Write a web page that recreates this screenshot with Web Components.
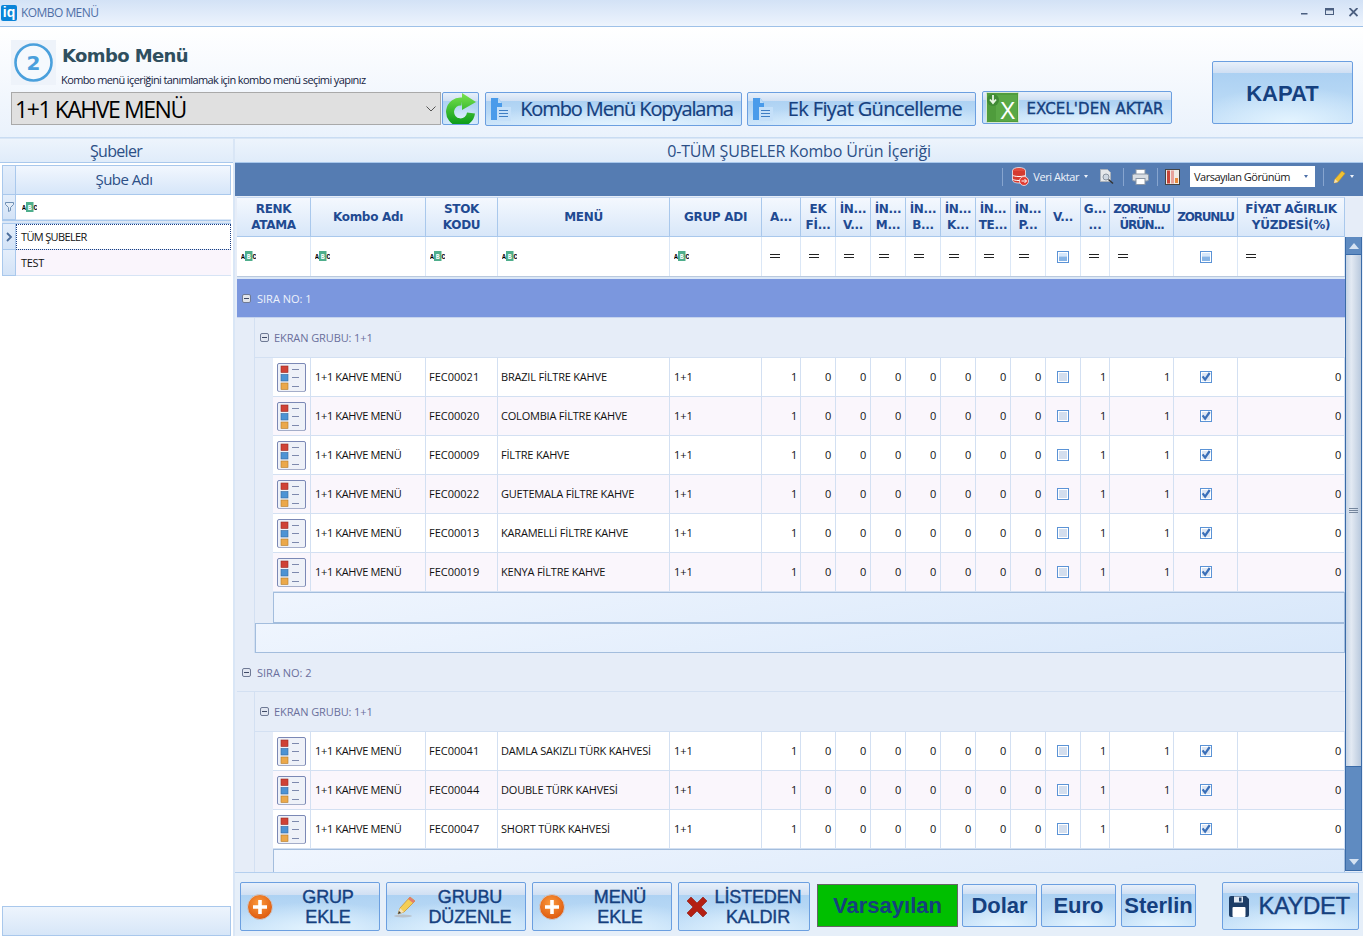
<!DOCTYPE html>
<html lang="tr">
<head>
<meta charset="utf-8">
<title>KOMBO MENÜ</title>
<style>
  html, body { margin: 0; padding: 0; height: 100%; overflow: hidden; background: #e9f1fb; }
  body { font-family: "Liberation Sans", Arial, sans-serif; }
</style>
</head>
<body>
<iq-window></iq-window>
<script>
const COLS = '74px 115px 72px 172px 92px 39px 35px 35px 35px 35px 35px 35px 35px 35px 29px 64px 64px 107px';
const FIRST_COL_NESTED = 38; // 273 -> 311, icon cell once nested

const GROUP1 = [
  ['FEC00021', 'BRAZIL FİLTRE KAHVE'],
  ['FEC00020', 'COLOMBIA FİLTRE KAHVE'],
  ['FEC00009', 'FİLTRE KAHVE'],
  ['FEC00022', 'GUETEMALA FİLTRE KAHVE'],
  ['FEC00013', 'KARAMELLİ FİLTRE KAHVE'],
  ['FEC00019', 'KENYA FİLTRE KAHVE']
];
const GROUP2 = [
  ['FEC00041', 'DAMLA SAKIZLI TÜRK KAHVESİ'],
  ['FEC00044', 'DOUBLE TÜRK KAHVESİ'],
  ['FEC00047', 'SHORT TÜRK KAHVESİ']
];

const ABC = `<svg width="15" height="10" viewBox="0 0 15 10" style="display:block"><rect x="4" y="0" width="7.500" height="10" fill="#4fae8c"/><g font-family="Liberation Mono, monospace" font-size="6.500" font-weight="700"><text x="0" y="7.500" fill="#000">A</text><text x="5.800" y="7.500" fill="#fff">B</text><text x="11.500" y="7.500" fill="#000">C</text></g></svg>`;
const EQ = `<svg width="10" height="5" viewBox="0 0 10 5" style="display:block"><path d="M0 .5h10M0 3.500h10" stroke="#222" stroke-width="1"/></svg>`;

function checkbox(state) {
  // state: 'off', 'on', 'filter'
  let inner = '<rect x="2" y="2" width="8" height="8" fill="#d3deee"/>';
  if (state === 'on') inner = '<rect x="2" y="2" width="8" height="8" fill="#dde6f3"/><path d="M2.600 5.400l2.500 3.200 4.600-6.600" fill="none" stroke="#3a6fb8" stroke-width="2.200"/>';
  if (state === 'filter') inner = '<rect x="2" y="2" width="8" height="3.500" fill="#d5e7fb"/><rect x="2" y="5.500" width="8" height="4.500" fill="#86b4e6"/>';
  return `<svg width="12" height="12" viewBox="0 0 12 12" style="display:block"><rect x=".5" y=".5" width="11" height="11" fill="#fff" stroke="#5b93d6"/>${inner}</svg>`;
}

const RENK_ICON = `<svg width="29" height="29" viewBox="0 0 29 29" style="display:block">
  <rect x=".5" y=".5" width="28" height="28" rx="1.500" fill="#eef1f8" stroke="#7b88b5"/>
  <path d="M1 28.500h27" stroke="#a4adc9"/>
  <rect x="4" y="3" width="7" height="6.500" fill="#cf4236" stroke="#9a2b22" stroke-width=".6"/>
  <rect x="4" y="11.500" width="7" height="6.500" fill="#4d93d4" stroke="#33689f" stroke-width=".6"/>
  <rect x="4" y="20" width="7" height="6.500" fill="#eba84a" stroke="#b37a28" stroke-width=".6"/>
  <path d="M15 6.500h7M15 14.500h7M15 23.500h7" stroke="#7d89ad"/>
</svg>`;

const ORANGE_PLUS = `<svg width="26" height="26" viewBox="0 0 26 26" style="display:block"><defs><radialGradient id="o" cx=".45" cy=".35" r=".75"><stop offset="0" stop-color="#fb9a3c"/><stop offset="1" stop-color="#d94f08"/></radialGradient></defs><circle cx="13" cy="13" r="12.500" fill="url(#o)" stroke="#c9ccd4"/><path d="M13 6v14M6 13h14" stroke="#fff" stroke-width="3.600"/></svg>`;
const PENCIL = `<svg width="26" height="26" viewBox="0 0 26 26" style="display:block"><ellipse cx="10" cy="22" rx="9" ry="1.400" fill="#b9c2cc"/><path d="M5 20l2-6L17 3l5 4L11 18z" fill="#f5cf55" stroke="#c8973a" stroke-width=".8"/><path d="M17 3l5 4-2 2-5-4z" fill="#e27b6f"/><path d="M5 20l2-6 4 4z" fill="#f4e2bc"/><path d="M5 20l1-3 2 2z" fill="#333"/></svg>`;
const RED_X = `<svg width="24" height="24" viewBox="0 0 24 24" style="display:block"><path d="M2 6l4-4 6 6 6-6 4 4-6 6 6 6-4 4-6-6-6 6-4-4 6-6z" fill="#b41f12" stroke="#8c1a10" stroke-width=".6"/></svg>`;
const FLOPPY = `<svg width="22" height="23" viewBox="0 0 22 23" style="display:block"><path d="M1 3q0-2 2-2h15l3 3v16q0 2-2 2H3q-2 0-2-2z" fill="#1d3d66"/><rect x="6" y="1.500" width="9" height="6" fill="#dfe7f1"/><rect x="11" y="2.500" width="2.500" height="4" fill="#1d3d66"/><rect x="4.500" y="12" width="13" height="10" rx="1" fill="#fff"/></svg>`;
const DOC = `<svg width="22" height="26" viewBox="0 0 22 26" style="display:block"><path d="M0 2h7l4 5v17H0z" fill="#4a9bea"/><path d="M7 2l4 5H7z" fill="#bcdcf8"/><path d="M6 11h14v14H6z" fill="#c5e0f9"/><path d="M8 14.500h9M8 17.500h9M8 20.500h9" stroke="#3e7ec4"/></svg>`;
const EXCEL = `<svg width="33" height="31" viewBox="0 0 33 31" style="display:block"><rect x=".5" y=".5" width="32" height="30" rx="1" fill="#4f9c3c" stroke="#d6e8cf"/><rect x="10" y="3" width="21" height="26" fill="#5aa846"/><text x="14" y="27" font-family="Liberation Sans, sans-serif" font-size="23" fill="#fff">X</text><circle cx="7" cy="8" r="6" fill="#3f8a34"/><path d="M7 3v7M4 7.500l3 3.500 3-3.500" fill="none" stroke="#e8f5e2" stroke-width="1.800"/></svg>`;
const REFRESH = `<svg width="31" height="31" viewBox="0 0 31 31" style="display:block"><defs><linearGradient id="g" gradientUnits="userSpaceOnUse" x1="0" y1="0" x2="0" y2="31"><stop offset="0" stop-color="#7be34f"/><stop offset="1" stop-color="#0c9c1a"/></linearGradient></defs><path d="M25 20A10.500 10.500 0 1 1 16 8.500" fill="none" stroke="url(#g)" stroke-width="8"/><path d="M16 0l14 9-14 8z" fill="url(#g)"/></svg>`;

// glossy blue button used across the window
class IqButton extends HTMLElement {
  constructor() {
    super();
    this.attachShadow({mode: 'open'}).innerHTML = `
      <style>
        :host { display: inline-flex; box-sizing: border-box; border: 1px solid #6b9fe0; border-radius: 2px;
          color: #15407f; font-family: "Liberation Sans", Arial, sans-serif; align-items: center; overflow: hidden; position: relative;
          background:
            linear-gradient(180deg, #e8f0fa 0, #cfdff3 var(--gloss, 26%), transparent var(--gloss, 26%)),
            radial-gradient(ellipse 70% 60% at 55% 100%, #e4f4ff 0, transparent 100%),
            linear-gradient(180deg, #a6cdf1 0, #c4e0f8 100%); }
        .wrap { display: flex; align-items: center; width: 100%; height: 100%; }
        .ic { flex: none; display: flex; margin-right: var(--gap, 0); }
        .tx { flex: 1; text-align: center; line-height: var(--lh, 1.1); white-space: nowrap; padding-top: var(--tp, 0); }
      </style>
      <div class="wrap"><span class="ic"><slot name="icon"></slot></span><span class="tx"><slot></slot></span></div>`;
  }
}
customElements.define('iq-button', IqButton);

class IqTitlebar extends HTMLElement {
  constructor() {
    super();
    this.attachShadow({mode: 'open'}).innerHTML = `
      <style>
        :host { display: flex; height: 27px; box-sizing: border-box; align-items: flex-start; justify-content: space-between;
          background: linear-gradient(180deg, #d3e2f6 0, #e9f1fc 22px, #eff5fd 100%); border-bottom: 1px solid #9ec1e8; }
        .l { display: flex; align-items: center; gap: 4px; padding: 4px 0 0 1px; }
        .logo { width: 16px; height: 16px; background: #0a84d8; border-radius: 2px; color: #fff; font: 700 14px/15px "Liberation Sans", sans-serif; text-align: center; }
        .t { font: 12px "Open Sans", "Liberation Sans", sans-serif; color: #4f6fa6; letter-spacing: -.55px; }
        .r { display: flex; gap: 15px; padding: 8px 5px 0 0; align-items: flex-start; }
      </style>
      <div class="l"><div class="logo">iq</div><span class="t">KOMBO MENÜ</span></div>
      <div class="r">
        <svg width="9" height="10" viewBox="0 0 9 10"><rect x="0" y="5" width="6.500" height="1.500" fill="#4b5f80"/></svg>
        <svg width="9" height="10" viewBox="0 0 9 10"><rect x=".5" y=".5" width="8" height="6" fill="#dbe5f2" stroke="#4b5f80"/><rect x="0" y="0" width="9" height="2.500" fill="#4b5f80"/></svg>
        <svg width="9" height="10" viewBox="0 0 9 10"><path d="M.5 0l8 8M8.500 0l-8 8" stroke="#4b5f80" stroke-width="1.800"/></svg>
      </div>`;
  }
}
customElements.define('iq-titlebar', IqTitlebar);

class IqHeader extends HTMLElement {
  constructor() {
    super();
    const ic = s => s.replace('<svg', '<svg slot="icon"');
    this.attachShadow({mode: 'open'}).innerHTML = `
      <style>
        :host { display: grid; grid-template-columns: 1fr auto; height: 111px; box-sizing: border-box; padding: 13px 10px 0 11px;
          background: linear-gradient(180deg, #fff 0, #eaf2fc 100%); border-bottom: 1px solid #c9dcf2; }
        .top { display: flex; height: 50px; }
        .badge { width: 45px; height: 45px; background: #eef3fa; display: flex; align-items: center; justify-content: center; flex: none; }
        .tt { padding-left: 5px; }
        h1 { margin: 5px 0 0 1px; font: 700 18px/22px "DejaVu Sans", sans-serif; color: #2f4f5f; letter-spacing: -.6px; }
        p { margin: 6px 0 0; font: 11px/13px "Open Sans", "Liberation Sans", sans-serif; color: #14233f; letter-spacing: -.6px; white-space: nowrap; }
        .row { display: flex; align-items: flex-start; margin-top: 2px; }
        .combo { width: 430px; height: 33px; box-sizing: border-box; border: 1px solid #a9a9a9; background: #e0e0e0; display: flex; align-items: center; justify-content: space-between;
          padding: 0 4px 0 3px; font: 23px "Open Sans", "Liberation Sans", sans-serif; color: #000; letter-spacing: -1.45px; }
        .btns { display: flex; align-items: flex-start; margin-left: 1px; }
        iq-button.r { width: 37px; height: 33px; padding-left: 3px; }
        iq-button.k { height: 34px; font: 20px "Open Sans", "Liberation Sans", sans-serif; -webkit-text-stroke: .2px #15407f; }
        .side { display: flex; }
        iq-button.kapat { width: 141px; height: 63px; margin-top: 21px; font: 700 22px "Liberation Sans", sans-serif; --gloss: 18%; --tp: 3px; }
      </style>
      <div>
        <div class="top">
          <div class="badge"><svg width="39" height="39" viewBox="0 0 39 39"><circle cx="19.500" cy="19.500" r="18" fill="#f5f9fd" stroke="#4aa0dc" stroke-width="2.600"/><text x="19.500" y="27" text-anchor="middle" font-family="DejaVu Sans, sans-serif" font-weight="700" font-size="20" fill="#4aa0dc">2</text></svg></div>
          <div class="tt"><h1>Kombo Menü</h1><p>Kombo menü içeriğini tanımlamak için kombo menü seçimi yapınız</p></div>
        </div>
        <div class="row">
          <div class="combo"><span>1+1 KAHVE MENÜ</span><svg width="10" height="6" viewBox="0 0 10 6"><path d="M.5.5L5 5 9.500.5" fill="none" stroke="#555"/></svg></div>
          <div class="btns">
            <iq-button class="r">${ic(REFRESH)}</iq-button>
            <iq-button class="k" style="width:257px;margin-left:6px;padding-left:5px;padding-right:1px;letter-spacing:-1.1px">${ic(DOC)}Kombo Menü Kopyalama</iq-button>
            <iq-button class="k" style="width:229px;margin-left:5px;padding-left:5px;letter-spacing:-.65px">${ic(DOC)}Ek Fiyat Güncelleme</iq-button>
            <iq-button class="k" style="width:190px;height:33px;margin:-1px 0 0 6px;padding-left:3px;font:15px 'DejaVu Sans',sans-serif;--lh:1;--tp:3px;letter-spacing:.1px;-webkit-text-stroke:.35px #15407f">${ic(EXCEL)}EXCEL'DEN AKTAR</iq-button>
          </div>
        </div>
      </div>
      <div class="side"><iq-button class="kapat">KAPAT</iq-button></div>`;
  }
}
customElements.define('iq-header', IqHeader);

// panel caption strip (Şubeler, 0-TÜM ŞUBELER ...)
class IqCaption extends HTMLElement {
  constructor() {
    super();
    this.attachShadow({mode: 'open'}).innerHTML = `
      <style>
        :host { display: flex; align-items: center; justify-content: center; height: 24px; box-sizing: border-box; color: #2c4f86; padding-right: var(--pr, 0);
          font: 16px "Open Sans", "Liberation Sans", sans-serif; letter-spacing: var(--ls, -.3px); background: linear-gradient(180deg, #edf4fc, #e0ecfa); border-bottom: 1px solid #a9c8ec; }
      </style><slot></slot>`;
  }
}
customElements.define('iq-caption', IqCaption);

class IqBranches extends HTMLElement {
  constructor() {
    super();
    this.attachShadow({mode: 'open'}).innerHTML = `
      <style>
        :host { display: flex; flex-direction: column; background: #fff; height: 100%; box-sizing: border-box; padding: 2px 2px 0 2px; }
        .row { display: grid; grid-template-columns: 14px 1fr; }
        .ind { background: linear-gradient(180deg, #e4eefb, #d3e3f7); border: solid #a9c8ec; border-width: 0 1px 1px 1px; display: flex; align-items: center; justify-content: center; box-sizing: border-box; }
        .head .ind { border-top: 1px solid #a9c8ec; }
        .head .c { height: 30px; box-sizing: border-box; border: 1px solid #a9c8ec; border-left: 0; background: linear-gradient(180deg, #f2f7fe, #d6e6f9); padding: 0 0 2px 2px;
          display: flex; align-items: center; justify-content: center; font: 15px "Open Sans", "Liberation Sans", sans-serif; color: #2c4f86; letter-spacing: -.55px; }
        .filter { height: 25px; }
        .filter .c { display: flex; align-items: center; padding-left: 6px; border-bottom: 1px solid #dbe7f6; }
        .sep { height: 4px; background: #dbe7f6; border-top: 1px solid #a9c8ec; border-bottom: 1px solid #a9c8ec; box-sizing: border-box; }
        .data { height: 26px; }
        .data .c { display: flex; align-items: center; padding-left: 5px; font: 11px "Open Sans", "Liberation Sans", sans-serif; letter-spacing: -.65px; color: #111; border-bottom: 1px solid #d7e4f5; box-sizing: border-box; }
        .sel .c { outline: 1px dotted #1b3c80; outline-offset: -1px; }
        .alt .c { background: #faf5fc; letter-spacing: -.35px; }
        .foot { margin-top: auto; height: 30px; box-sizing: border-box; border: 1px solid #a9c8ec; background: linear-gradient(180deg, #edf4fd, #d7e6f8); }
      </style>
      <div class="row head"><div class="ind"></div><div class="c">Şube Adı</div></div>
      <div class="row filter"><div class="ind"><svg width="9" height="10" viewBox="0 0 9 10"><path d="M.5.500h8v2L5.500 5.500v3l-2 1v-4L.5 2.500z" fill="#e3edf8" stroke="#6f8fb4"/></svg></div><div class="c">${ABC}</div></div>
      <div class="sep"></div>
      <div class="row data sel"><div class="ind"><svg width="7" height="10" viewBox="0 0 7 10"><path d="M1 1l4 4-4 4" fill="none" stroke="#4a6c9b" stroke-width="1.800"/></svg></div><div class="c">TÜM ŞUBELER</div></div>
      <div class="row data alt"><div class="ind"></div><div class="c">TEST</div></div>
      <div class="foot"></div>`;
  }
}
customElements.define('iq-branches', IqBranches);

class IqToolbar extends HTMLElement {
  constructor() {
    super();
    this.attachShadow({mode: 'open'}).innerHTML = `
      <style>
        :host { display: flex; justify-content: flex-end; align-items: center; height: 33px; box-sizing: border-box; padding: 1px 9px 7px 0; background: #557cb2; color: #eef3fb; font: 11px "Open Sans", "Liberation Sans", sans-serif; letter-spacing: -.45px; }
        .s { width: 1px; height: 18px; background: #87a5cf; }
        .i { display: flex; align-items: center; }
        .arr { width: 0; height: 0; border: 2.500px solid transparent; border-top: 3px solid #eef3fb; border-bottom: 0; }
        .sel { width: 125px; height: 21px; box-sizing: border-box; background: #fff; color: #1a1a1a; display: flex; align-items: center; justify-content: space-between; padding: 0 7px 0 4px; letter-spacing: -.5px; }
        .sel .arr { border-top-color: #4c6fa8; }
      </style>
      <div class="s"></div>
      <div class="i" style="margin-left:9px"><svg width="17" height="19" viewBox="0 0 17 19"><ellipse cx="7" cy="3.500" rx="6.500" ry="3" fill="#e24a3e" stroke="#fff" stroke-width=".7"/><path d="M.5 4v9c0 2 3 3 6.500 3s6.500-1 6.500-3V4" fill="#d53a30" stroke="#fff" stroke-width=".7"/><path d="M.5 8c1 2 12 2 13 0M.5 12c1 2 12 2 13 0" fill="none" stroke="#fff"/><circle cx="12" cy="14" r="4.500" fill="#e23d33" stroke="#fff" stroke-width=".7"/><path d="M9.500 14h5M12.500 12l2 2-2 2" fill="none" stroke="#fff"/></svg></div>
      <span style="margin-left:4px">Veri Aktar</span><span class="arr" style="margin-left:5px"></span>
      <div class="i" style="margin-left:11px"><svg width="16" height="16" viewBox="0 0 16 16"><path d="M1.500.5h7l3 3v9h-10z" fill="#e6e8ea" stroke="#aab2bc"/><circle cx="7" cy="8" r="3" fill="#cfd8e2" stroke="#8a94a0"/><path d="M9.500 10.500l4.500 4" stroke="#333" stroke-width="1.500"/></svg></div>
      <div class="s" style="margin-left:8px"></div>
      <div class="i" style="margin-left:8px"><svg width="17" height="16" viewBox="0 0 17 16"><rect x="4" y=".5" width="9" height="5" fill="#fff" stroke="#8a96a5"/><rect x=".5" y="5" width="16" height="7" rx="1.500" fill="#d8dde3" stroke="#8a96a5"/><rect x="4" y="9.500" width="9" height="6" fill="#fff" stroke="#8a96a5"/></svg></div>
      <div class="s" style="margin-left:8px"></div>
      <div class="i" style="margin-left:7px"><svg width="15" height="16" viewBox="0 0 15 16"><rect x=".5" y=".5" width="14" height="15" fill="#f0ece6" stroke="#444"/><rect x="2" y="1.500" width="3" height="13" fill="#c9453a"/><rect x="6" y="1.500" width="3" height="13" fill="#e7a39c"/><rect x="10" y="9" width="3" height="5" fill="#e78a3c"/></svg></div>
      <div class="sel" style="margin-left:10px"><span>Varsayılan Görünüm</span><span class="arr"></span></div>
      <div class="s" style="margin-left:8px"></div>
      <div class="i" style="margin-left:9px"><svg width="13" height="14" viewBox="0 0 13 14"><path d="M1 13l1-4L9 1l3 2.500L5 12z" fill="#f1c232" stroke="#c99522" stroke-width=".6"/><path d="M1 13l1-4 3 3z" fill="#f3dfb8"/></svg></div>
      <span class="arr" style="margin-left:4px"></span>`;
  }
}
customElements.define('iq-toolbar', IqToolbar);

const HEADERS = ['RENK ATAMA', 'Kombo Adı', 'STOK KODU', 'MENÜ', 'GRUP ADI', 'A...', 'EK Fİ...', 'İN... V...', 'İN... M...', 'İN... B...', 'İN... K...', 'İN... TE...', 'İN... P...', 'V...', 'G... ...', 'ZORUNLU ÜRÜN...', 'ZORUNLU', 'FİYAT AĞIRLIK YÜZDESİ(%)'];

class IqGridHead extends HTMLElement {
  constructor() {
    super();
    const heads = HEADERS.map((h, i) => `<div class="h${i === 15 || i === 16 ? ' nar' : ''}">${h}</div>`).join('');
    const filters = HEADERS.map((h, i) => {
      const check = i === 13 || i === 16;
      const body = i < 5 ? ABC : (check ? checkbox('filter') : EQ);
      return `<div class="f${check ? ' ctr' : i < 5 ? ' abc' : ' eq'}">${body}</div>`;
    }).join('');
    this.attachShadow({mode: 'open'}).innerHTML = `
      <style>
        :host { display: block; background: #fff; }
        .g { display: grid; grid-template-columns: ${COLS}; }
        .hr { height: 40px; }
        .h { box-sizing: border-box; border-right: 1px solid #a9c8ec; border-top: 1px solid #c8daf2; border-bottom: 1px solid #a9c8ec; background: linear-gradient(180deg, #f4f8fe, #d8e7f9);
          display: flex; align-items: center; justify-content: center; text-align: center; padding: 0 1px;
          font: 700 12px/16px "DejaVu Sans", sans-serif; letter-spacing: -.3px; color: #1f4a92; }
        .h.nar { letter-spacing: -1.2px; }
        .fr { height: 39px; }
        .f { box-sizing: border-box; border-right: 1px solid #dbe7f6; display: flex; align-items: center; padding-left: 4px; }
        .f.abc { padding-bottom: 2px; }
        .f.eq { padding-left: 8px; }
        .f.ctr { justify-content: center; padding-left: 0; }
        .sep { height: 3px; background: #dbe7f6; border-top: 1px solid #b9c9de; box-sizing: border-box; }
      </style>
      <div class="g hr">${heads}</div>
      <div class="g fr">${filters}</div>
      <div class="sep"></div>`;
  }
}
customElements.define('iq-grid-head', IqGridHead);

class IqRow extends HTMLElement {
  connectedCallback() { this.render(); }
  render() {
    const nums = ['1', '0', '0', '0', '0', '0', '0', '0'];
    const cols = COLS.split(' ');
    cols[0] = FIRST_COL_NESTED + 'px';
    this.shadowRoot || this.attachShadow({mode: 'open'});
    this.shadowRoot.innerHTML = `
      <style>
        :host { display: grid; grid-template-columns: ${cols.join(' ')}; height: 39px; box-sizing: border-box; border-bottom: 1px solid #d3e0f2; background: #fff;
          font: 11px "Open Sans", "Liberation Sans", sans-serif; letter-spacing: -.35px; color: #111; }
        :host([alt]) { background: #faf6fc; }
        .c { box-sizing: border-box; border-right: 1px solid #d3e0f2; display: flex; align-items: center; padding: 0 4px 2px; white-space: nowrap; overflow: hidden; }
        .code { padding-left: 3px; letter-spacing: 0; }
        .menu { padding-left: 3px; letter-spacing: -.2px; }
        .grp { letter-spacing: 0; }
        .n { justify-content: flex-end; }
        .one, .last { padding-right: 3px; }
        .m { justify-content: center; padding: 0; }
        .i { padding: 0 0 0 4px; }
      </style>
      <div class="c i">${RENK_ICON}</div>
      <div class="c">1+1 KAHVE MENÜ</div>
      <div class="c code">${this.getAttribute('code')}</div>
      <div class="c menu">${this.getAttribute('menu')}</div>
      <div class="c grp">1+1</div>
      ${nums.map(n => `<div class="c n${n === '1' ? ' one' : ''}">${n}</div>`).join('')}
      <div class="c m">${checkbox('off')}</div>
      <div class="c n one">1</div>
      <div class="c n one">1</div>
      <div class="c m">${checkbox('on')}</div>
      <div class="c n last">0</div>`;
  }
}
customElements.define('iq-row', IqRow);

// one "SIRA NO" block with its nested "EKRAN GRUBU" block
class IqGroup extends HTMLElement {
  set data(d) {
    this._d = d;
    this.render();
  }
  render() {
    const d = this._d;
    const expander = c => `<svg width="9" height="9" viewBox="0 0 9 9"><rect x=".5" y=".5" width="8" height="8" rx="1.500" fill="${c}" stroke="#6f7a95"/><path d="M2 4.500h5" stroke="#3f4a66"/></svg>`;
    const rows = d.rows.map((r, i) => `<iq-row code="${r[0]}" menu="${r[1]}"${i % 2 ? ' alt' : ''}></iq-row>`).join('');
    this.attachShadow({mode: 'open'}).innerHTML = `
      <style>
        :host { display: block; background: #e6edf8; color: #6a6f9c; font: 11px "Open Sans", "Liberation Sans", sans-serif; letter-spacing: 0; }
        .g1 { display: flex; align-items: center; gap: 6px; padding-left: 5px; height: 39px; box-sizing: border-box; border-bottom: 1px solid #d3e0f2; }
        .active .g1 { background: #7b97de; color: #eef2fb; border-bottom-color: #c6d4ee; }
        .in1 { margin-left: 17px; border-left: 1px solid #d3e0f2; box-sizing: border-box; }
        .g2 { display: flex; align-items: center; gap: 5px; padding: 0 0 1px 5px; height: 40px; box-sizing: border-box; border-bottom: 1px solid #d3e0f2; letter-spacing: -.1px; }
        .in2 { margin-left: 18px; }
        .fo { height: 31px; box-sizing: border-box; border: 1px solid #a3bddd; background: linear-gradient(170deg, #eff5fe, #d9e8fa); }
        .fo.outer { height: 30px; }
      </style>
      <div class="${d.active ? 'active' : ''}">
        <div class="g1">${expander(d.active ? '#e3e5ea' : '#e1e6f1')}<span>SIRA NO: ${d.no}</span></div>
        <div class="in1">
          <div class="g2">${expander('#e1e6f1')}<span>EKRAN GRUBU: 1+1</span></div>
          <div class="in2">${rows}<div class="fo"></div></div>
          <div class="fo outer"></div>
        </div>
      </div>`;
  }
}
customElements.define('iq-group', IqGroup);

class IqScrollbar extends HTMLElement {
  constructor() {
    super();
    this.attachShadow({mode: 'open'}).innerHTML = `
      <style>
        :host { display: flex; flex-direction: column; width: 17px; background: #5f8bc1; box-sizing: border-box; border: solid #3a6ba8; border-width: 0 1px 1px; }
        .b { height: 17px; flex: none; display: flex; align-items: center; justify-content: center; }
        .t { height: 513px; flex: none; box-sizing: border-box; border-top: 1px solid #3a6ba8; border-bottom: 1px solid #3a6ba8; background: linear-gradient(90deg, #c5d3e4 0, #e3eaf3 35%, #b9c9dd 100%); display: flex; align-items: center; justify-content: center; }
        .gr { width: 9px; height: 6px; background: repeating-linear-gradient(180deg, #75869d 0 1px, transparent 1px 2px); }
        .sp { flex: 1; }
      </style>
      <div class="b"><svg width="10" height="6" viewBox="0 0 10 6"><path d="M5 0l5 6H0z" fill="#d5e2f2"/></svg></div>
      <div class="t"><div class="gr"></div></div>
      <div class="sp"></div>
      <div class="b"><svg width="10" height="6" viewBox="0 0 10 6"><path d="M5 6L0 0h10z" fill="#d5e2f2"/></svg></div>`;
  }
}
customElements.define('iq-scrollbar', IqScrollbar);

class IqGrid extends HTMLElement {
  constructor() {
    super();
    this.attachShadow({mode: 'open'}).innerHTML = `
      <style>
        :host { display: grid; grid-template-columns: 1fr 17px; flex: 1; min-height: 0; background: #e6edf8; padding: 1px 1px 0 2px; box-sizing: border-box; }
        .left { display: flex; flex-direction: column; min-height: 0; overflow: hidden; }
        .body { flex: 1; min-height: 0; overflow: hidden; }
        iq-scrollbar { margin: 40px 0 1px; }
      </style>
      <div class="left">
        <iq-grid-head></iq-grid-head>
        <div class="body"><iq-group id="a"></iq-group><iq-group id="b"></iq-group></div>
      </div>
      <iq-scrollbar></iq-scrollbar>`;
    this.shadowRoot.getElementById('a').data = {no: 1, active: true, rows: GROUP1};
    this.shadowRoot.getElementById('b').data = {no: 2, rows: GROUP2};
  }
}
customElements.define('iq-grid', IqGrid);

class IqFooter extends HTMLElement {
  constructor() {
    super();
    const ic = s => s.replace('<svg', '<svg slot="icon"');
    this.attachShadow({mode: 'open'}).innerHTML = `
      <style>
        :host { display: flex; align-items: flex-start; height: 64px; box-sizing: border-box; padding: 9px 0 0 5px; background: #e6eff9; border-top: 1px solid #b4cfee; }
        iq-button { height: 49px; font: 18px/20px "Liberation Sans", sans-serif; -webkit-text-stroke: .4px #15407f; --lh: 20px; --tp: 1px; letter-spacing: -.15px; }
        .a { width: 140px; margin-right: 6px; padding-left: 6px; }
        .m { height: 43px; margin-top: 2px; font: 700 22px "Liberation Sans", sans-serif; margin-right: 4px; -webkit-text-stroke: 0; letter-spacing: 0; --lh: 1.1; --tp: 1px; --gloss: 22%; }
      </style>
      <iq-button class="a" style="--gap:4px">${ic(ORANGE_PLUS)}GRUP<br>EKLE</iq-button>
      <iq-button class="a" style="padding-right:4px">${ic(PENCIL)}GRUBU<br>DÜZENLE</iq-button>
      <iq-button class="a" style="--gap:4px">${ic(ORANGE_PLUS)}MENÜ<br>EKLE</iq-button>
      <iq-button class="a" style="width:132px;margin-right:7px;padding-right:2px">${ic(RED_X)}LİSTEDEN<br>KALDIR</iq-button>
      <iq-button class="m" style="width:141px;background:#00bf00;border-color:#666;border-radius:0">Varsayılan</iq-button>
      <iq-button class="m" style="width:75px">Dolar</iq-button>
      <iq-button class="m" style="width:75px;margin-right:5px">Euro</iq-button>
      <iq-button class="m" style="width:75px;margin-right:26px">Sterlin</iq-button>
      <iq-button style="width:137px;height:48px;font-size:24px;padding-left:5px;letter-spacing:-.5px;--lh:1.1;--tp:0px;--gloss:22%">${ic(FLOPPY)}KAYDET</iq-button>`;
  }
}
customElements.define('iq-footer', IqFooter);

class IqWindow extends HTMLElement {
  constructor() {
    super();
    this.attachShadow({mode: 'open'}).innerHTML = `
      <style>
        :host { display: flex; flex-direction: column; width: 1363px; height: 936px; overflow: hidden; }
        .main { flex: 1; min-height: 0; display: grid; grid-template-columns: 233px 1fr; column-gap: 2px; padding-top: 1px; background: #d9e6f6; }
        .col { display: flex; flex-direction: column; min-height: 0; background: #e9f1fb; }
        .lb { flex: 1; min-height: 0; }
        .rb { flex: 1; min-height: 0; display: flex; flex-direction: column; }
      </style>
      <iq-titlebar></iq-titlebar>
      <iq-header></iq-header>
      <div class="main">
        <div class="col"><iq-caption style="--ls:-.7px;--pr:1px">Şubeler</iq-caption><iq-branches class="lb"></iq-branches></div>
        <div class="col"><iq-caption style="--ls:-.15px">0-TÜM ŞUBELER Kombo Ürün İçeriği</iq-caption><div class="rb"><iq-toolbar></iq-toolbar><iq-grid></iq-grid><iq-footer></iq-footer></div></div>
      </div>`;
  }
}
customElements.define('iq-window', IqWindow);
</script>
</body>
</html>
